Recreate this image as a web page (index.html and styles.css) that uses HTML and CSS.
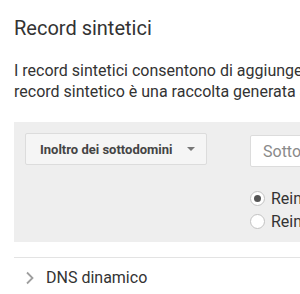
FILE: index.html
```html
<!DOCTYPE html>
<html lang="it">
<head>
    <meta charset="UTF-8">
    <meta name="viewport" content="width=device-width, initial-scale=1.0">
    <title>Record sintetici</title>
    <link rel="stylesheet" href="styles.css">
</head>
<body>
    <div class="page">
        <h2 class="title">Record sintetici</h2>
        <p class="intro">I record sintetici consentono di aggiungere rapidamente risorse comuni al DNS del dominio. Ogni<br>record sintetico è una raccolta generata automaticamente di record di risorse.</p>

        <div class="panel">
            <div class="select_btn">
                <span>Inoltro dei sottodomini</span>
                <span class="caret"></span>
            </div>
            <div class="fields">
                <input class="sub_input" type="text" placeholder="Sottodominio">
                <div class="radios">
                    <label class="radio"><span class="dot checked"></span>Reindirizzamento temporaneo (302)</label>
                    <label class="radio"><span class="dot"></span>Reindirizzamento permanente (301)</label>
                </div>
            </div>
        </div>

        <div class="section">
            <svg class="chevron" width="10" height="14" viewBox="0 0 10 14">
                <path d="M2 1.5 L7.5 7 L2 12.5" fill="none" stroke="#9e9e9e" stroke-width="1.8"/>
            </svg>
            <span>DNS dinamico</span>
        </div>
    </div>
</body>
</html>
```

FILE: styles.css
```css
* {
    padding: 0;
    margin: 0;
    box-sizing: border-box;
    font-family: Roboto, 'Liberation Sans', Arial, sans-serif;
}

body {
    background: white;
    overflow: hidden;
}

.page {
    width: 780px;
    padding-left: 14px;
}

.title {
    font-size: 20px;
    font-weight: 400;
    line-height: 24px;
    color: #333;
    margin-top: 16px;
}

.intro {
    font-size: 16px;
    line-height: 21px;
    color: #333;
    margin-top: 20px;
    white-space: nowrap;
}

.panel {
    display: flex;
    align-items: flex-start;
    margin-top: 20px;
    padding: 11px 11px 9px 11px;
    background: #eeeeee;
}

.select_btn {
    display: flex;
    align-items: center;
    justify-content: space-between;
    width: 182px;
    height: 32px;
    padding: 0 11px 0 14px;
    background: #f5f5f5;
    border: 1px solid #dcdcdc;
    border-radius: 2px;
    font-size: 13px;
    font-weight: 700;
    color: #444;
}

.caret {
    width: 0;
    height: 0;
    border-left: 4px solid transparent;
    border-right: 4px solid transparent;
    border-top: 4px solid #777;
}

.fields {
    margin-left: 43px;
    padding-top: 2px;
}

.sub_input {
    width: 300px;
    height: 32px;
    padding: 0 12px;
    border: 1px solid #dcdcdc;
    border-radius: 2px;
    background: white;
    font-size: 16px;
    color: #333;
    outline: none;
}

.sub_input::placeholder {
    color: #8a8a8a;
}

.radios {
    margin-top: 20px;
}

.radio {
    display: flex;
    align-items: center;
    height: 23px;
    font-size: 16px;
    color: #333;
}

.dot {
    display: flex;
    align-items: center;
    justify-content: center;
    width: 15px;
    height: 15px;
    margin-right: 6px;
    border: 1px solid #c2c2c2;
    border-radius: 50%;
    background: white;
}

.dot.checked::after {
    content: "";
    width: 7px;
    height: 7px;
    border-radius: 50%;
    background: #555;
}

.section {
    display: flex;
    align-items: center;
    margin-top: 15px;
    padding-top: 10px;
    border-top: 1px solid #e3e3e3;
    font-size: 16px;
    color: #333;
}

.chevron {
    margin-left: 11px;
    margin-right: 11px;
}
```
